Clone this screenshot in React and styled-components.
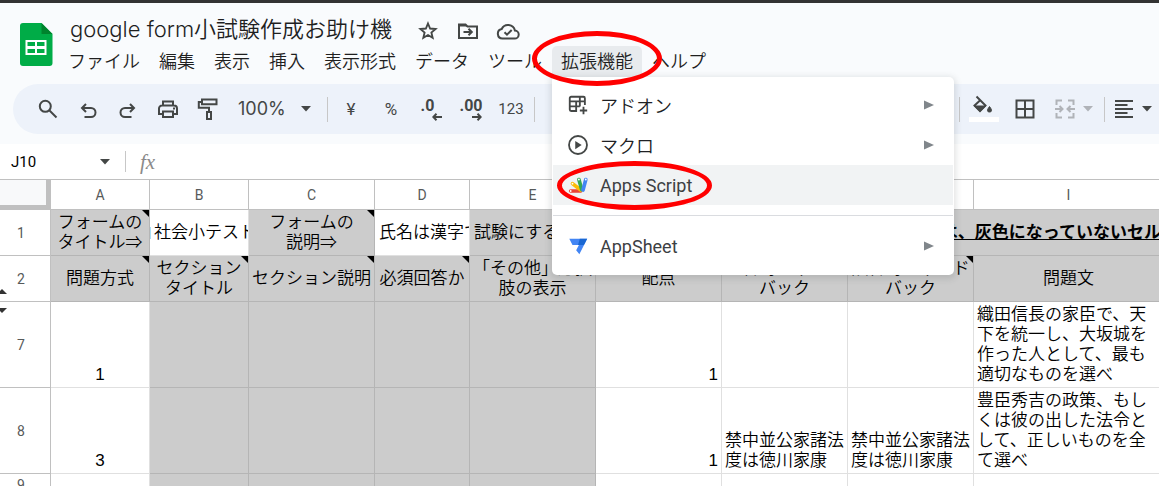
import React from 'react';
import styled, { createGlobalStyle, css } from 'styled-components';

const ui = '"Roboto", "Noto Sans CJK JP", sans-serif';
const brand = '"Inter", "Noto Sans CJK JP", sans-serif';
const sheet = '"Liberation Sans", "Noto Sans CJK JP", sans-serif';

const Global = createGlobalStyle`
  *, *::before, *::after { box-sizing: border-box; }
  body { margin: 0; background: #fff; overflow: hidden; }
  button, input { font: inherit; color: inherit; border: 0; padding: 0; margin: 0; background: none; }
  svg { display: block; flex: none; }
`;

const Page = styled.div`
  height: 100vh;
  overflow: hidden;
  border-top: 3px solid #333;
  background: #f9fbfd;
  font-family: ${ui};
  font-weight: 350;
  color: #1f1f1f;
`;

const Header = styled.header`
  display: flex;
  height: 81px;
  padding-left: 20px;
`;

const Logo = styled.a`
  margin-top: 20px;
  width: 39px;
`;

const HeaderText = styled.div`
  flex: 1;
  min-width: 0;
  padding-top: 10px;
`;

const TitleRow = styled.div`
  display: flex;
  align-items: center;
  height: 32px;
  padding-left: 11px;
  gap: 24px;
`;

const Title = styled.h1`
  margin: 0;
  font: 350 22px/32px ${brand};
  white-space: nowrap;
`;

const TitleActions = styled.div`
  display: flex;
  gap: 16px;
  padding-top: 3px;
`;

const IconButton = styled.button`
  display: flex;
  align-items: center;
  justify-content: center;
  flex: none;
  width: ${(p) => p.$w || 40}px;
  height: ${(p) => p.$h || 36}px;
  font-size: ${(p) => p.$size || 17}px;
  color: #444746;
`;

const MenuBar = styled.nav`
  display: flex;
  gap: 1px;
  padding-top: 1px;
`;

const MenuSlot = styled.div`
  position: relative;
  flex: none;
`;

const MenuButton = styled.button`
  height: 31px;
  padding: 0 9px;
  font-size: 18px;
  font-weight: inherit;
  line-height: 31px;
  white-space: nowrap;
  border-radius: 5px 5px 0 0;
  background: ${(p) => (p.$open ? '#e8ebee' : 'none')};
`;

const Ring = styled.span`
  position: absolute;
  z-index: 3;
  top: ${(p) => p.$top}px;
  left: ${(p) => p.$left}px;
  width: ${(p) => p.$w}px;
  height: ${(p) => p.$h}px;
  border: 5px solid #f00;
  border-radius: 50%;
  pointer-events: none;
`;

const Dropdown = styled.div`
  position: absolute;
  z-index: 2;
  top: 31px;
  left: 0;
  width: 402px;
  padding: 8px 1px 9px;
  background: #fff;
  border-radius: 0 5px 5px 5px;
  box-shadow: 0 2px 6px 2px rgba(60, 64, 67, 0.15);
`;

const DropItem = styled.button`
  position: relative;
  display: flex;
  align-items: center;
  width: 100%;
  height: 40px;
  padding: 0 19px 0 14px;
  gap: 11px;
  font-size: 18px;
  color: #444746;
  text-align: left;
  background: ${(p) => (p.$active ? '#f1f3f4' : 'none')};
`;

const DropLabel = styled.span`
  flex: 1;
  font-weight: ${(p) => (p.$latin ? 400 : 350)};
  color: ${(p) => (p.$latin ? '#3c4043' : '#202124')};
`;

const Rule = styled.hr`
  margin: 10px 0;
  border: 0;
  height: 1px;
  background: #dadce0;
`;

const Toolbar = styled.div`
  display: flex;
  align-items: center;
  height: 50px;
  margin-left: 13px;
  padding-left: 15px;
  border-radius: 25px 0 0 25px;
  background: #edf2fa;
  color: #444746;
  font: 400 16px/20px ${ui};
`;

const Sep = styled.span`
  flex: none;
  width: 1px;
  height: ${(p) => p.$h || 25}px;
  margin: 0 ${(p) => p.$gap || 3}px;
  background: #c7c7c7;
`;

const Zoom = styled.label`
  display: flex;
  align-items: center;
  width: 96px;
  padding-left: 10px;
`;

const ZoomInput = styled.input`
  width: 63px;
  font-family: ${brand};
  font-size: 18px;
`;

const RightTools = styled.div`
  display: flex;
  align-items: center;
  margin-left: auto;
  padding-right: 3px;
`;

const Split = styled.button`
  display: flex;
  align-items: center;
  gap: 6px;
  padding: 0 ${(p) => p.$pad || 0}px;
  color: ${(p) => (p.$off ? '#b0b3b8' : '#444746')};
`;

const FormulaBar = styled.div`
  display: flex;
  align-items: center;
  height: 35px;
  margin-top: 10px;
  padding-left: 11px;
  background: #fff;
`;

const NameBox = styled.input`
  width: 84px;
  font-size: 15px;
  font-weight: 400;
  color: #000;
`;

const FormulaInput = styled.input`
  flex: 1;
  min-width: 0;
`;

const Fx = styled.label`
  width: 26px;
  margin-left: 4px;
  font: italic 400 21px/24px "Liberation Serif", serif;
  color: #8a8a8a;
`;

const Grid = styled.table`
  width: 1164px;
  table-layout: fixed;
  border-collapse: separate;
  border-spacing: 0;
  border-top: 1px solid #c0c0c0;
  background: #fff;
  font: 350 17px/20px ${sheet};
  color: #000;
`;

const ColHead = styled.th`
  height: 30px;
  padding: 0;
  border-right: 1px solid #c0c0c0;
  border-bottom: 1px solid #c0c0c0;
  font: 400 14px/20px ${ui};
  color: #575a5a;
`;

const Corner = styled.td`
  padding: 0;
  background: #f8f9fa;
  border-right: 5px solid #c0c0c0;
  border-bottom: 5px solid #c0c0c0;
`;

const RowHead = styled.th`
  position: relative;
  height: ${(p) => p.$h}px;
  padding: 0 8px 0 0;
  border-right: 1px solid #c0c0c0;
  border-bottom: 1px solid #c0c0c0;
  font: 400 14px/20px ${ui};
  color: #575a5a;
`;

const HiddenRowsMark = styled.span`
  position: absolute;
  left: -3px;
  ${(p) => (p.$up ? 'bottom: 7px; border-bottom: 5px solid #333;' : 'top: 6px; border-top: 5px solid #333;')}
  border-left: 5px solid transparent;
  border-right: 5px solid transparent;
`;

const cellPadding = (p) => {
  if (p.$clip) return '0 2px 0 4px';
  return p.$mid ? '0 3px' : '2px 3px';
};

const Cell = styled.td`
  position: relative;
  padding: ${cellPadding};
  overflow: hidden;
  border-right: 1px solid ${(p) => (p.$gray ? '#b5b5b5' : '#e0e0e0')};
  border-bottom: 1px solid ${(p) => (p.$gray ? '#b5b5b5' : '#e0e0e0')};
  background: ${(p) => (p.$gray ? '#ccc' : '#fff')};
  text-align: ${(p) => p.$align || 'left'};
  vertical-align: ${(p) => (p.$mid ? 'middle' : 'bottom')};
  white-space: ${(p) => (p.$clip ? 'nowrap' : 'pre-line')};
  ${(p) => p.$strong && css`
    font-weight: 700;
    text-decoration: underline;
  `}
  ${(p) => p.$spill && css`
    background: linear-gradient(#a8def5, #a8def5) 0 17px / 1px 12px no-repeat #fff;
  `}
  ${(p) => p.$note && css`
    &::after {
      content: '';
      position: absolute;
      top: 0;
      right: 0;
      border-top: 7px solid #000;
      border-left: 7px solid transparent;
    }
  `}
`;

const Ic = ({ children, s = 24, sw = 2 }) => (
  <svg width={s} height={s} viewBox="0 0 24 24" fill="none" stroke="currentColor" strokeWidth={sw} aria-hidden="true">
    {children}
  </svg>
);

const Caret = () => (
  <svg width="10" height="6" viewBox="0 0 10 6" fill="currentColor" aria-hidden="true"><path d="M0 0h10L5 5.500z" /></svg>
);

const Arrow = () => (
  <svg width="10" height="10" viewBox="0 0 10 10" fill="#80868b" aria-hidden="true"><path d="M0 .5v9L10 5z" /></svg>
);

const SheetsLogo = () => (
  <svg width="33" height="43" viewBox="0 0 33 43" aria-hidden="true">
    <path d="M3 0h18.500L32.500 11v29a3 3 0 0 1-3 3H3a3 3 0 0 1-3-3V3a3 3 0 0 1 3-3z" fill="#00ac47" />
    <path d="M21.500 0 32.500 11h-11z" fill="#00832d" />
    <path d="M5.500 17h21v15h-21zM7.500 19v4h7.500v-4zM17 19v4h7.500v-4zM7.500 26v4h7.500v-4zM17 26v4h7.500v-4z" fill="#fff" fillRule="evenodd" />
  </svg>
);

const icons = {
  star: <path d="m12 3.800 2.300 5.500 6 .5-4.600 3.900 1.400 5.800-5.100-3.100-5.100 3.100 1.400-5.800-4.600-3.900 6-.5z" />,
  move: <><path d="M3 6.500V19h18V7.500h-9.500l-2-2H3z" /><path d="M2.500 5h7l2 2.500h-9z" fill="currentColor" stroke="none" /><path d="M7.500 13h8M12.500 9.700l3.300 3.300-3.300 3.300" /></>,
  cloud: <><path d="M6.500 19.500h12a4 4 0 0 0 .4-8A7 7 0 0 0 5.700 10a4.800 4.800 0 0 0 .8 9.500z" /><path d="m8.500 13.200 2.500 2.500 4.700-4.700" /></>,
  search: <><circle cx="9.300" cy="9.300" r="5.500" /><path d="m13.500 13.500 7 7" /></>,
  undo: <><path d="M8.500 20H15a4 4 0 0 0 0-9H6.500" /><path d="m10 7-4 4 4 4" /></>,
  redo: <><path d="M15.500 20H9a4 4 0 0 1 0-9h8.500" /><path d="m14 7 4 4-4 4" /></>,
  print: <><path d="M7 8.500V4.500h10v4M7 17H3v-5.500a3 3 0 0 1 3-3h12a3 3 0 0 1 3 3V17h-4" /><path d="M7 14.500h10V20H7z" /><path d="M17 11.500h2" /></>,
  paint: <><path d="M6 2.500h14.500v4.800H6zM6 5H2.800v5.800H13V15" /><path d="M11 15h4v7h-4z" /></>,
  borders: <path d="M3.500 3.500h17v17h-17zM12 3.500v17M3.500 12h17" />,
  merge: <path d="M9 3.500H3.500V8M3.500 16v4.500H9M15 3.500h5.500V8M20.500 16v4.500H15M2 12h7M15 12h7M6.500 9l3 3-3 3M17.500 9l-3 3 3 3" />,
  align: <path d="M3 4h18M3 8h12.500M3 12h18M3 16h12.500M3 20h18" />,
};

const FillIcon = () => (
  <svg width="30" height="30" viewBox="0 0 30 30" aria-hidden="true">
    <path d="M7.500 2.500 16.500 11.500l-5.500 5.500-5.500-5.500L11.500 6" fill="none" stroke="#444746" strokeWidth="2" />
    <path d="M5.500 12h11L11 17.500z" fill="#444746" stroke="#444746" />
    <path d="M20.500 12.500c-3 3.800-2.300 5.500 0 5.500s3-1.700 0-5.500z" fill="#444746" stroke="#444746" />
    <path d="M0 23h30v5H0z" fill="#fff" />
  </svg>
);

const Decimal = styled.span`
  display: flex;
  flex-direction: column;
  align-items: ${(p) => (p.$left ? 'flex-start' : 'center')};
  font: 700 16px/16px ${ui};
  svg { margin: -1px 0 0 11px; }
`;

const DecArrow = ({ left }) => (
  <svg width="10" height="8" viewBox="0 0 10 8" fill="none" stroke="currentColor" strokeWidth="2" aria-hidden="true">
    <path d={left ? 'M10 4H1M4.500 .8 1.300 4l3.200 3.200' : 'M0 4h9M5.500 .8 8.700 4 5.500 7.200'} />
  </svg>
);

const AddonIcon = () => (
  <Ic s={22}><path d="M19.500 12V4.500a1.500 1.500 0 0 0-1.500-1.500H4.500A1.500 1.500 0 0 0 3 4.500V17a1.500 1.500 0 0 0 1.500 1.500H11M3 8h16.500M3 13.500h11M10 8v10.500M14 3v10.500M18 14v8M14 18h8" /></Ic>
);
const MacroIcon = () => (
  <Ic s={22}><circle cx="12" cy="12" r="9.800" /><path d="M9 7.500v9l7-4.500z" fill="currentColor" stroke="none" /></Ic>
);
const ScriptIcon = () => (
  <svg width="22" height="22" viewBox="0 0 24 24" fill="none" strokeLinecap="round" strokeWidth="4" aria-hidden="true">
    <path d="M4 18.500h11" stroke="#ea4335" />
    <path d="M6 10.500 15 17.500" stroke="#fbbc04" />
    <path d="m13 6 3 11" stroke="#34a853" />
    <path d="M20.500 6 17.500 17.500" stroke="#4285f4" />
    <g fill="#fff" stroke="none"><circle cx="4" cy="18.500" r="1" /><circle cx="6" cy="10.500" r="1" /><circle cx="13" cy="6" r="1" /><circle cx="20.500" cy="6" r="1" /></g>
  </svg>
);
const AppSheetIcon = () => (
  <svg width="22" height="22" viewBox="0 0 24 24" aria-hidden="true">
    <path d="M2.500 4h19.500L13.500 21 10 16.500l3-5.500H6z" fill="#4285f4" />
    <path d="M14 4h8l-3.500 7H12z" fill="#1967d2" />
  </svg>
);

const menusBefore = ['ファイル', '編集', '表示', '挿入', '表示形式', 'データ', 'ツール'];
const widths = [51, 99, 99, 126, 95, 126, 126, 126, 126, 190];

export default function App() {
  return (
    <Page>
      <Global />
      <Header>
        <Logo href="#" aria-label="Sheets"><SheetsLogo /></Logo>
        <HeaderText>
          <TitleRow>
            <Title>google form小試験作成お助け機</Title>
            <TitleActions>
              <IconButton $w={24} $h={24} aria-label="star"><Ic s={22}>{icons.star}</Ic></IconButton>
              <IconButton $w={24} $h={24} aria-label="move"><Ic>{icons.move}</Ic></IconButton>
              <IconButton $w={24} $h={24} aria-label="cloud"><Ic>{icons.cloud}</Ic></IconButton>
            </TitleActions>
          </TitleRow>
          <MenuBar>
            {menusBefore.map((m) => <MenuSlot key={m}><MenuButton>{m}</MenuButton></MenuSlot>)}
            <MenuSlot>
              <MenuButton $open>拡張機能</MenuButton>
              <Ring $top={-15} $left={-20} $w={130} $h={55} />
              <Dropdown>
                <DropItem><AddonIcon /><DropLabel>アドオン</DropLabel><Arrow /></DropItem>
                <DropItem><MacroIcon /><DropLabel>マクロ</DropLabel><Arrow /></DropItem>
                <DropItem $active>
                  <ScriptIcon /><DropLabel $latin>Apps Script</DropLabel>
                  <Ring $top={-4} $left={4} $w={155} $h={49} />
                </DropItem>
                <Rule />
                <DropItem><AppSheetIcon /><DropLabel $latin>AppSheet</DropLabel><Arrow /></DropItem>
              </Dropdown>
            </MenuSlot>
            <MenuSlot><MenuButton>ヘルプ</MenuButton></MenuSlot>
          </MenuBar>
        </HeaderText>
      </Header>

      <Toolbar>
        {['search', 'undo', 'redo', 'print', 'paint'].map((n) => (
          <IconButton key={n} aria-label={n}><Ic>{icons[n]}</Ic></IconButton>
        ))}
        <Zoom>
          <ZoomInput aria-label="zoom" defaultValue="100%" />
          <Caret />
        </Zoom>
        <Sep />
        <IconButton>¥</IconButton>
        <IconButton>%</IconButton>
        <IconButton><Decimal $left>.0<DecArrow left /></Decimal></IconButton>
        <IconButton><Decimal>.00<DecArrow /></Decimal></IconButton>
        <IconButton $size={15}>123</IconButton>
        <Sep />
        <RightTools>
          <Sep />
          <IconButton $w={42} aria-label="fill"><FillIcon /></IconButton>
          <IconButton aria-label="borders"><Ic>{icons.borders}</Ic></IconButton>
          <Split $off $pad={8} aria-label="merge"><Ic>{icons.merge}</Ic><Caret /></Split>
          <Sep />
          <Split $pad={4} aria-label="align"><Ic>{icons.align}</Ic><Caret /></Split>
        </RightTools>
      </Toolbar>

      <FormulaBar>
        <NameBox aria-label="cell" defaultValue="J10" />
        <IconButton $w={20} $h={24} aria-label="names"><Caret /></IconButton>
        <Sep $h={21} $gap={10} />
        <Fx htmlFor="formula">fx</Fx>
        <FormulaInput id="formula" />
      </FormulaBar>

      <Grid>
        <colgroup>{widths.map((w, i) => <col key={i} width={w} />)}</colgroup>
        <thead>
          <tr>
            <Corner />
            {[...'ABCDEFGHI'].map((c) => <ColHead key={c}>{c}</ColHead>)}
          </tr>
        </thead>
        <tbody>
          <tr>
            <RowHead $h={46}>1</RowHead>
            <Cell $gray $mid $align="center" $note>{'フォームの\nタイトル⇒'}</Cell>
            <Cell $mid $clip $spill>社会小テスト</Cell>
            <Cell $gray $mid $align="center" $note>{'フォームの\n説明⇒'}</Cell>
            <Cell $mid $clip>氏名は漢字で</Cell>
            <Cell $gray $mid $clip>試験にする</Cell>
            <Cell $gray colSpan={2} />
            <Cell $gray $mid $clip $strong $align="right" colSpan={2}>は、灰色になっていないセル</Cell>
          </tr>
          <tr>
            <RowHead $h={46}>2<HiddenRowsMark $up /></RowHead>
            <Cell $gray $mid $align="center" $note>問題方式</Cell>
            <Cell $gray $mid $align="center" $note>{'セクション\nタイトル'}</Cell>
            <Cell $gray $mid $align="center" $note>セクション説明</Cell>
            <Cell $gray $mid $align="center" $note>必須回答か</Cell>
            <Cell $gray $mid $align="center" $note>{'「その他」選択\n肢の表示'}</Cell>
            <Cell $gray $mid $align="center" $note>配点</Cell>
            <Cell $gray $mid $align="center" $note>{'正答時フィード\nバック'}</Cell>
            <Cell $gray $mid $align="center" $note>{'誤答時フィード\nバック'}</Cell>
            <Cell $gray $mid $align="center">問題文</Cell>
          </tr>
          <tr>
            <RowHead $h={86}>7<HiddenRowsMark /></RowHead>
            <Cell $align="center">1</Cell>
            <Cell $gray /><Cell $gray /><Cell $gray /><Cell $gray />
            <Cell $align="right">1</Cell>
            <Cell /><Cell />
            <Cell>織田信長の家臣で、天下を統一し、大坂城を作った人として、最も適切なものを選べ</Cell>
          </tr>
          <tr>
            <RowHead $h={86}>8</RowHead>
            <Cell $align="center">3</Cell>
            <Cell $gray /><Cell $gray /><Cell $gray /><Cell $gray />
            <Cell $align="right">1</Cell>
            <Cell>禁中並公家諸法度は徳川家康</Cell>
            <Cell>禁中並公家諸法度は徳川家康</Cell>
            <Cell>豊臣秀吉の政策、もしくは彼の出した法令として、正しいものを全て選べ</Cell>
          </tr>
          <tr>
            <RowHead $h={22}>9</RowHead>
            <Cell />
            <Cell $gray /><Cell $gray /><Cell $gray /><Cell $gray />
            <Cell /><Cell /><Cell /><Cell />
          </tr>
        </tbody>
      </Grid>
    </Page>
  );
}
